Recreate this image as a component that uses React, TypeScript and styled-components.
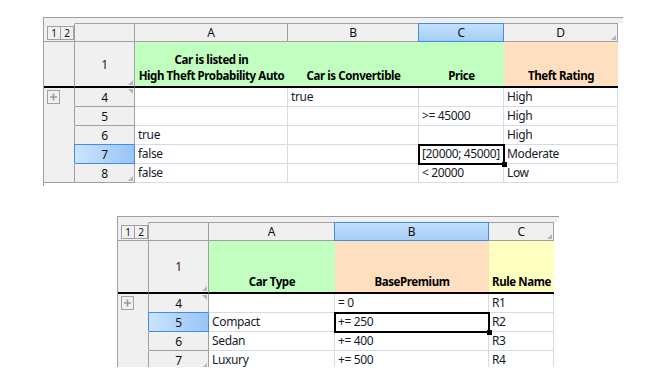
import React from "react";
import styled, { createGlobalStyle, css } from "styled-components";

const GlobalStyle = createGlobalStyle`
  html, body { margin: 0; background: #fff; }
  body { font-family: "Noto Sans", "Open Sans", sans-serif; color: #111; }
`;

type Fill = "green" | "peach" | "yellow";

const fills: Record<Fill, string> = {
  green: "#c1ffc1",
  peach: "#ffdfbf",
  yellow: "#ffffc0",
};

interface Header {
  lines: string[];
  fill: Fill;
}

interface Row {
  n: number;
  cells: string[];
}

interface SheetDef {
  offset: number;
  gap: number;
  cols: number[];
  letters: string[];
  selCol: number;
  headHeight: number;
  heads: Header[];
  rows: Row[];
  selRow: number;
  clip?: number;
}

const sheets: SheetDef[] = [
  {
    offset: 43,
    gap: 17,
    cols: [153, 131, 85, 114],
    letters: ["A", "B", "C", "D"],
    selCol: 2,
    headHeight: 42,
    heads: [
      { lines: ["Car is listed in", "High Theft Probability Auto"], fill: "green" },
      { lines: ["Car is Convertible"], fill: "green" },
      { lines: ["Price"], fill: "green" },
      { lines: ["Theft Rating"], fill: "peach" },
    ],
    rows: [
      { n: 4, cells: ["", "true", "", "High"] },
      { n: 5, cells: ["", "", ">= 45000", "High"] },
      { n: 6, cells: ["true", "", "", "High"] },
      { n: 7, cells: ["false", "", "[20000; 45000]", "Moderate"] },
      { n: 8, cells: ["false", "", "< 20000", "Low"] },
    ],
    selRow: 7,
  },
  {
    offset: 117,
    gap: 30,
    cols: [126, 154, 65],
    letters: ["A", "B", "C"],
    selCol: 1,
    headHeight: 49,
    heads: [
      { lines: ["Car Type"], fill: "green" },
      { lines: ["BasePremium"], fill: "peach" },
      { lines: ["Rule Name"], fill: "yellow" },
    ],
    rows: [
      { n: 4, cells: ["", "= 0", "R1"] },
      { n: 5, cells: ["Compact", "+= 250", "R2"] },
      { n: 6, cells: ["Sedan", "+= 400", "R3"] },
      { n: 7, cells: ["Luxury", "+= 500", "R4"] },
    ],
    selRow: 5,
    clip: 151,
  },
];

const Page = styled.div`
  display: flex;
  flex-direction: column;
  align-items: flex-start;
`;

const Panel = styled.div<{ $offset: number; $gap: number; $clip?: number }>`
  margin-left: ${(p) => p.$offset}px;
  margin-top: ${(p) => p.$gap}px;
  border-top: 1px solid #a0a0a0;
  border-left: 1px solid #a0a0a0;
  padding-bottom: 3px;
  ${(p) =>
    p.$clip &&
    css`
      height: ${p.$clip}px;
      padding-bottom: 0;
      overflow: hidden;
      box-sizing: border-box;
    `}
`;

const TopStrip = styled.div`
  height: 5px;
  background: #f0f0f0;
`;

const Grid = styled.div<{ $cols: string }>`
  display: grid;
  grid-template-columns: ${(p) => p.$cols};
  margin-right: 5px;
  font-size: 12px;
  letter-spacing: -0.35px;
`;

const GutterCell = styled.div<{ $rule: "gray" | "black" | "none" }>`
  background: #f0f0f0;
  border-right: 1px solid #a0a0a0;
  ${(p) =>
    p.$rule === "black"
      ? css`border-bottom: 2px solid #000;`
      : css`border-bottom: 1px solid ${p.$rule === "gray" ? "#a0a0a0" : "#f0f0f0"};`}
  display: flex;
  align-items: center;
  padding-left: 3px;
`;

const Levels = styled.div`
  display: flex;
`;

const LevelButton = styled.div`
  width: 12px;
  height: 12px;
  border: 1px solid #a0a0a0;
  margin-right: -1px;
  font-size: 10px;
  line-height: 12px;
  letter-spacing: 0;
  text-align: center;
  color: #111;
`;

const Expander = styled.svg`
  display: block;
  align-self: flex-start;
  margin-top: 2px;
`;

const ColHead = styled.div<{ $selected?: boolean }>`
  position: relative;
  height: 17px;
  line-height: 17px;
  text-align: center;
  background: #f0f0f0;
  border-top: 1px solid #a0a0a0;
  border-bottom: 1px solid #a0a0a0;
  border-right: 1px solid #a0a0a0;
  color: #111;
  ${(p) =>
    p.$selected &&
    css`
      z-index: 1;
      background: linear-gradient(#c3e0fd, #a6cdf7);
      border-color: #3d8ee9;
      box-shadow: -1px 0 0 #3d8ee9;
    `}
`;

const RowHead = styled.div<{ $selected?: boolean; $head?: boolean; $height?: number }>`
  position: relative;
  height: ${(p) => p.$height ?? 18}px;
  display: flex;
  align-items: center;
  justify-content: center;
  background: #f0f0f0;
  border-right: 1px solid #a0a0a0;
  border-bottom: ${(p) => (p.$head ? "2px solid #000" : "1px solid #a0a0a0")};
  color: ${(p) => (p.$head ? "#3c0a3c" : "#111")};
  ${(p) =>
    p.$selected &&
    css`
      z-index: 1;
      background: linear-gradient(to right, #cbe4fe, #98c4f5);
      border-color: #3d8ee9;
      box-shadow: -1px -1px 0 #3d8ee9;
    `}
`;

const Grip = styled.span<{ $at: "top" | "bottom" }>`
  position: absolute;
  right: 1px;
  width: 5px;
  height: 5px;
  background: #b4b4b4;
  ${(p) =>
    p.$at === "bottom"
      ? css`
          bottom: 1px;
          clip-path: polygon(100% 0, 100% 100%, 0 100%);
        `
      : css`
          top: 1px;
          clip-path: polygon(0 0, 100% 0, 100% 100%);
        `}
`;

const HeadCell = styled.div<{ $fill: Fill; $height: number }>`
  height: ${(p) => p.$height}px;
  background: ${(p) => fills[p.$fill]};
  border-bottom: 2px solid #000;
  display: flex;
  flex-direction: column;
  justify-content: flex-end;
  align-items: center;
  padding-bottom: 2px;
  box-sizing: content-box;
  font-weight: 700;
  font-size: 11.5px;
  letter-spacing: -0.4px;
  line-height: 16px;
  white-space: nowrap;
  color: #000;
`;

const Cell = styled.div<{ $active?: boolean }>`
  position: relative;
  height: 18px;
  line-height: 18px;
  padding: 0 3px;
  border-right: 1px solid #d5dbe6;
  border-bottom: 1px solid #d5dbe6;
  white-space: nowrap;
  color: #141a2a;
  ${(p) =>
    p.$active &&
    css`
      z-index: 2;
      &::before {
        content: "";
        position: absolute;
        top: -1px;
        left: -1px;
        right: -2px;
        bottom: -2px;
        border: 2px solid #000;
      }
      &::after {
        content: "";
        position: absolute;
        right: -4px;
        bottom: -4px;
        width: 5px;
        height: 5px;
        background: #000;
      }
    `}
`;

const PlusIcon = () => (
  <Expander width="13" height="14" viewBox="0 0 13 14">
    <rect x="0.5" y="0.5" width="12" height="13" fill="#f0f0f0" stroke="#a0a0a0" />
    <path d="M6.5 3.5v7M3 7h7" stroke="#9a9a9a" strokeWidth="1.6" />
  </Expander>
);

const Sheet: React.FC<{ def: SheetDef }> = ({ def }) => {
  const cols = ["31px", "60px", ...def.cols.map((c) => `${c}px`)].join(" ");
  const last = def.rows.length - 1;
  return (
    <Panel $offset={def.offset} $gap={def.gap} $clip={def.clip}>
      <TopStrip />
      <Grid $cols={cols}>
        <GutterCell $rule="gray" style={{ borderTop: "1px solid #f0f0f0" }}>
          <Levels>
            <LevelButton>1</LevelButton>
            <LevelButton>2</LevelButton>
          </Levels>
        </GutterCell>
        <ColHead />
        {def.letters.map((l, i) => (
          <ColHead key={l} $selected={i === def.selCol}>
            {l}
            {i === def.letters.length - 1 && <Grip $at="bottom" />}
          </ColHead>
        ))}

        <GutterCell $rule="black" />
        <RowHead $head $height={def.headHeight + 2}>
          1
          <Grip $at="bottom" />
        </RowHead>
        {def.heads.map((h, i) => (
          <HeadCell key={i} $fill={h.fill} $height={def.headHeight}>
            {h.lines.map((line) => (
              <span key={line}>{line}</span>
            ))}
          </HeadCell>
        ))}

        {def.rows.map((r, ri) => (
          <React.Fragment key={r.n}>
            <GutterCell $rule={ri === last && !def.clip ? "gray" : "none"}>
              {ri === 0 && <PlusIcon />}
            </GutterCell>
            <RowHead $selected={r.n === def.selRow}>
              {r.n}
              {ri === 0 && <Grip $at="top" />}
              {ri === last && <Grip $at="bottom" />}
            </RowHead>
            {r.cells.map((c, ci) => (
              <Cell key={ci} $active={r.n === def.selRow && ci === def.selCol}>
                {c}
              </Cell>
            ))}
          </React.Fragment>
        ))}
      </Grid>
    </Panel>
  );
};

export default function App() {
  return (
    <Page>
      <GlobalStyle />
      {sheets.map((s, i) => (
        <Sheet key={i} def={s} />
      ))}
    </Page>
  );
}
